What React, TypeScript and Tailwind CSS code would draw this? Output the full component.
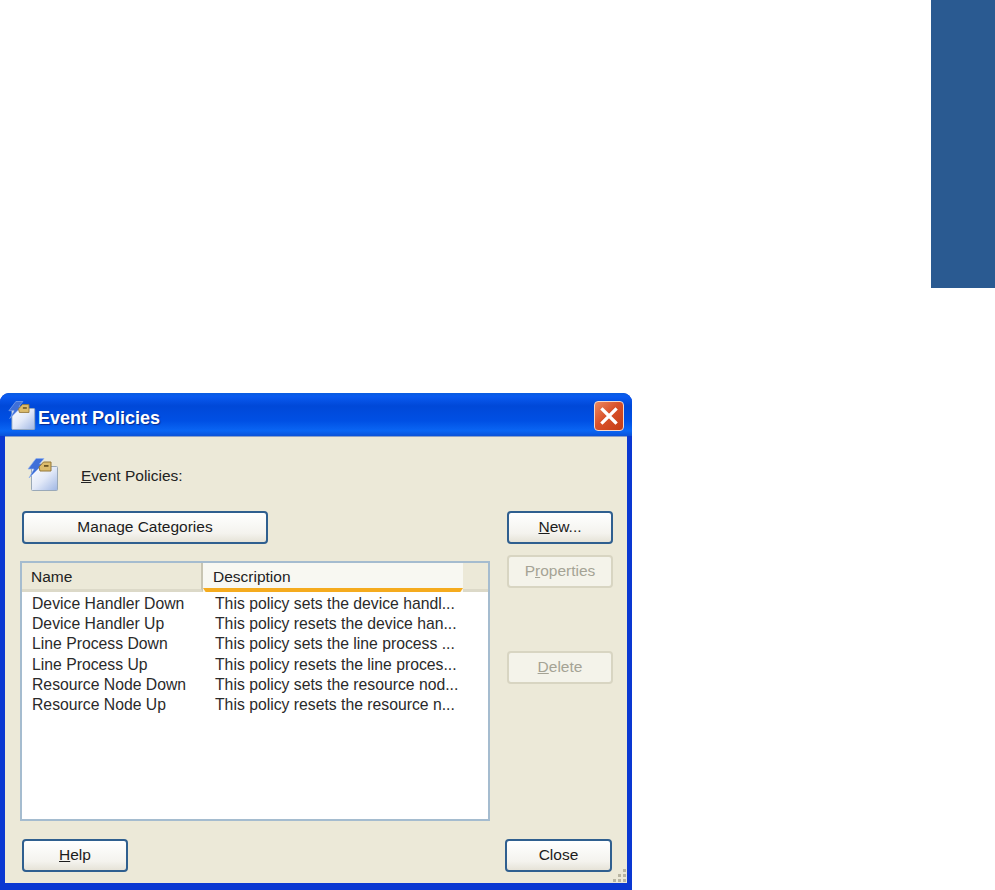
const rows = [
  { id: 1, name: "Device Handler Down", description: "This policy sets the device handl..." },
  { id: 2, name: "Device Handler Up", description: "This policy resets the device han..." },
  { id: 3, name: "Line Process Down", description: "This policy sets the line process ..." },
  { id: 4, name: "Line Process Up", description: "This policy resets the line proces..." },
  { id: 5, name: "Resource Node Down", description: "This policy sets the resource nod..." },
  { id: 6, name: "Resource Node Up", description: "This policy resets the resource n..." },
];

const PolicyIcon = ({ className, id }: { className: string; id: string }) => (
  <svg viewBox="0 0 32 33" className={className}>
    <defs>
      <linearGradient id={id} x1="0" y1="0" x2="1" y2="1">
        <stop offset="0" stopColor="#ffffff" />
        <stop offset="0.5" stopColor="#e2e9f8" />
        <stop offset="1" stopColor="#9fb6e4" />
      </linearGradient>
    </defs>
    <rect x="4.5" y="8.5" width="26" height="24" rx="1" fill={`url(#${id})`} stroke="#9aa9b8" />
    <path d="M9 0.5 L17 0.5 L12.5 6 L16 6 L2 20 L7 11 L1 11 Z" fill="#3f6fd8" stroke="#8fb0ee" strokeWidth="0.7" />
    <path d="M12 9 L16.5 4 L24 4 L24 13 L13 13 Z" fill="#dcbc6c" stroke="#94783a" />
    <rect x="17" y="7" width="4.5" height="1.8" fill="#6b5524" />
  </svg>
);

const XpButton = ({
  children,
  className,
  disabled,
}: {
  children: React.ReactNode;
  className: string;
  disabled?: boolean;
}) => (
  <button
    className={
      "h-[33px] rounded-[4px] border-2 text-[15.5px] flex items-center justify-center " +
      (disabled
        ? "border-[#d8d5c2] bg-[#f4f3ea] text-[#a5a395] "
        : "border-[#2f5f8f] bg-[linear-gradient(180deg,#ffffff_0%,#f4f3ee_70%,#e6e3d8_100%)] text-[#1c1c1c] ") +
      className
    }
  >
    {children}
  </button>
);

export default function App() {
  return (
    <div className="w-[995px] h-[890px] overflow-hidden bg-white font-['Liberation_Sans',Arial,sans-serif]">
      {/* Blue block top right */}
      <div className="flex justify-end">
        <div className="w-[64px] h-[288px] bg-[#2a5a91]" />
      </div>

      {/* Dialog */}
      <div className="mt-[105px] w-[632px] h-[497px] flex flex-col rounded-t-[9px] bg-[#0a38d2] overflow-hidden">
        {/* Title bar */}
        <div className="h-[43px] shrink-0 flex items-center justify-between pl-[8px] pr-[8px] pt-[2px] bg-[linear-gradient(180deg,#0a5ce0_0%,#0a5af0_8%,#0048d8_30%,#0050e4_65%,#0a66f4_88%,#0a52d8_100%)]">
          <div className="flex items-center gap-[2px]">
            <PolicyIcon id="sheet-title" className="w-[28px] h-[29px]" />
            <span className="pt-[5px] text-[18px] font-bold text-white [text-shadow:1px_1px_1px_#0a2a90]">
              Event Policies
            </span>
          </div>
          <div className="w-[30px] h-[30px] rounded-[4px] border border-[#f4d8cc] bg-[linear-gradient(135deg,#ec8a62_0%,#d9512a_45%,#c43c14_100%)] flex items-center justify-center">
            <svg viewBox="0 0 20 20" className="w-[20px] h-[20px]">
              <path d="M3.5 3.5 L16.5 16.5 M16.5 3.5 L3.5 16.5" stroke="#ffffff" strokeWidth="3.2" strokeLinecap="square" />
            </svg>
          </div>
        </div>

        {/* Body */}
        <div className="relative mx-[5px] h-[447px] shrink-0 border-t border-[#8aa0c8] bg-[#ece9d8] pl-[15px] pt-[21px]">
          <div className="flex items-center ml-[7px] h-[33px]">
            <PolicyIcon id="sheet-body" className="w-[32px] h-[33px]" />
            <span className="ml-[22px] mt-[2px] text-[15.5px] text-[#222222]">
              <span className="underline">E</span>vent Policies:
            </span>
          </div>

          <div className="flex mt-[20px] gap-[17px]">
            <div className="w-[470px] shrink-0">
              <XpButton className="w-[246px] ml-[2px] pb-[2px]">Manage Categories</XpButton>

              {/* List */}
              <div className="mt-[17px] h-[260px] border-2 border-[#a5bccf] bg-white">
                <div className="flex h-[29px] text-[15.5px] text-[#222222]">
                  <div className="w-[181px] flex items-center pl-[9px] pt-[1px] bg-[#ece9d8] border-b-[3px] border-[#dcd9c8] border-r-2 border-r-[#c8c5b2]">
                    Name
                  </div>
                  <div className="w-[260px] flex flex-col bg-[#f8f8f2]">
                    <div className="flex-1 min-h-0 flex items-center pl-[10px] pt-[3px] leading-none">Description</div>
                    <div className="h-[4px] shrink-0 bg-[#f5ab1e] [clip-path:polygon(0_0,100%_0,99%_100%,1%_100%)]" />
                  </div>
                  <div className="flex-1 bg-[#ece9d8] border-b-[3px] border-[#dcd9c8]" />
                </div>
                <div className="pt-[1.5px]">
                  {rows.map((row) => (
                    <div key={row.id} className="flex h-[20.3px] items-center text-[15.75px] text-[#2a2a2a]">
                      <div className="w-[183px] pl-[10px] whitespace-nowrap">{row.name}</div>
                      <div className="pl-[10px] whitespace-nowrap">{row.description}</div>
                    </div>
                  ))}
                </div>
              </div>
            </div>

            {/* Side buttons */}
            <div className="w-[106px] flex flex-col">
              <XpButton className="w-full pb-[2px]">
                <span>
                  <span className="underline">N</span>ew...
                </span>
              </XpButton>
              <XpButton className="w-full mt-[11px] pb-[2px]" disabled>
                <span>
                  P<span className="underline">r</span>operties
                </span>
              </XpButton>
              <XpButton className="w-full mt-[63px] pb-[2px]" disabled>
                <span>
                  <span className="underline">D</span>elete
                </span>
              </XpButton>
            </div>
          </div>

          {/* Footer buttons */}
          <div className="flex justify-between w-[592px] mt-[18px] pl-[2px]">
            <XpButton className="w-[106px] pb-[2px]">
              <span>
                <span className="underline">H</span>elp
              </span>
            </XpButton>
            <XpButton className="w-[107px] pb-[2px]">Close</XpButton>
          </div>

          {/* Resize grip */}
          <svg viewBox="0 0 16 16" className="absolute right-0 bottom-0 w-[16px] h-[16px]">
            {[
              [12, 2],
              [7, 7],
              [12, 7],
              [2, 12],
              [7, 12],
              [12, 12],
            ].map(([x, y]) => (
              <rect key={`${x}-${y}`} x={x} y={y} width="3" height="3" fill="#b8b5a2" />
            ))}
          </svg>
        </div>
      </div>
    </div>
  );
}
